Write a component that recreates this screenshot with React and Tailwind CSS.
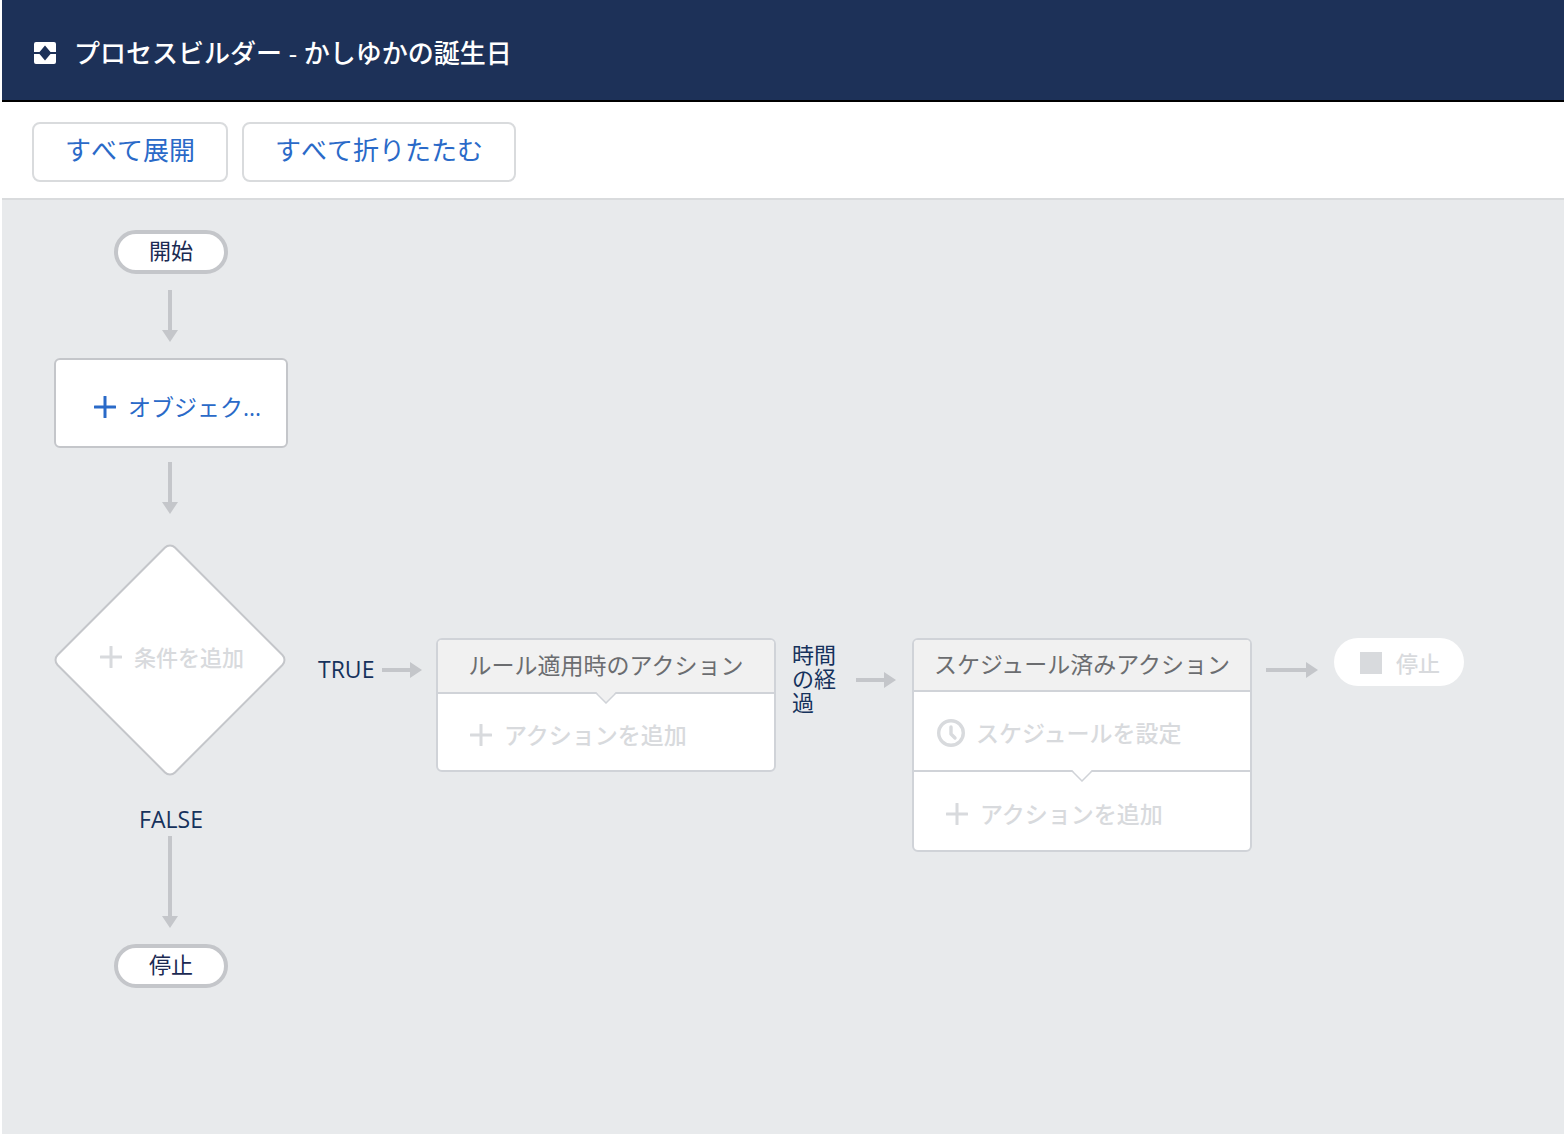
// src/App.jsx
function ProcessIcon() {
  return (
    <svg className="size-[22px] shrink-0" viewBox="0 0 22 22" fill="#ffffff" aria-hidden="true">
      <path d="M2 0H20Q22 0 22 2V10H16.5L11 3.6L5.5 10H0V2Q0 0 2 0Z" />
      <path d="M0 12H5.5L11 18.4L16.5 12H22V20Q22 22 20 22H2Q0 22 0 20Z" />
    </svg>
  );
}

function PlusIcon() {
  return (
    <svg className="size-[22px] shrink-0" viewBox="0 0 22 22" fill="currentColor" aria-hidden="true">
      <rect x="9.5" y="0" width="3" height="22" rx="0.5" />
      <rect x="0" y="9.5" width="22" height="3" rx="0.5" />
    </svg>
  );
}

function ClockIcon() {
  return (
    <svg className="size-7 shrink-0" viewBox="0 0 28 28" fill="none" stroke="currentColor" aria-hidden="true">
      <circle cx="14" cy="14" r="12.3" strokeWidth="3.4" />
      <path d="M14 8V15L18 19" strokeWidth="3.4" strokeLinecap="round" strokeLinejoin="round" />
    </svg>
  );
}

function DownArrow({ long }) {
  return long ? (
    <svg className="h-[92px] w-[18px] shrink-0" viewBox="0 0 18 92" fill="#c4c6ca" aria-hidden="true">
      <path d="M6 0H10V80H16L8 92L0 80H6Z" />
    </svg>
  ) : (
    <svg className="h-[52px] w-[18px] shrink-0" viewBox="0 0 18 52" fill="#c4c6ca" aria-hidden="true">
      <path d="M6 0H10V40H16L8 52L0 40H6Z" />
    </svg>
  );
}

function RightArrow({ long }) {
  return long ? (
    <svg className="h-4 w-[52px] shrink-0" viewBox="0 0 52 16" fill="#c4c6ca" aria-hidden="true">
      <path d="M0 6H40V0L52 8L40 16V10H0Z" />
    </svg>
  ) : (
    <svg className="h-4 w-10 shrink-0" viewBox="0 0 40 16" fill="#c4c6ca" aria-hidden="true">
      <path d="M0 6H28V0L40 8L28 16V10H0Z" />
    </svg>
  );
}

// Small pointer hanging from a card section
function Notch({ fill }) {
  return (
    <svg
      className="absolute top-full left-1/2 h-3 w-[22px] -translate-x-1/2"
      viewBox="0 0 22 12"
      aria-hidden="true"
    >
      <path d="M1 0H21L11 11Z" fill={fill} />
      <path d="M0.5 0.5L11 11L21.5 0.5" fill="none" stroke="#d0d3d8" strokeWidth="1.5" />
    </svg>
  );
}

function Terminal({ label }) {
  return (
    <div className="flex h-11 w-[114px] shrink-0 items-center justify-center rounded-full border-4 border-[#c4c6ca] bg-white pb-1 text-[22px] leading-6 text-[#1b2a52]">
      {label}
    </div>
  );
}

function ToolbarButton({ children }) {
  return (
    <button
      type="button"
      className="h-[60px] rounded-lg border-2 border-[#d9dbdd] bg-white px-[31px] pb-1 text-[26px] leading-8 text-[#2a6ac8] [font-kerning:none]"
    >
      {children}
    </button>
  );
}

export default function App() {
  return (
    <div className="min-h-screen bg-white pl-0.5 font-['Open_Sans','Noto_Sans_CJK_JP',sans-serif]">
      <div className="flex min-h-screen flex-col">
        <header className="flex h-[102px] items-center gap-[18px] border-b-2 border-black bg-[#1d3158] px-8 pt-1.5">
          <ProcessIcon />
          <h1 className="text-[26px] leading-8 font-medium text-white [font-kerning:none]">
            プロセスビルダー - かしゆかの誕生日
          </h1>
        </header>

        <div className="flex h-[98px] items-start gap-3.5 border-b-2 border-[#d9dbdd] px-[30px] pt-5">
          <ToolbarButton>すべて展開</ToolbarButton>
          <ToolbarButton>すべて折りたたむ</ToolbarButton>
        </div>

        <main className="flex flex-1 items-start bg-[#e8eaec] pt-[30px] pl-[52px]">
          {/* Main branch */}
          <div className="flex w-[234px] shrink-0 flex-col items-center">
            <Terminal label="開始" />
            <div className="mt-4">
              <DownArrow />
            </div>
            <button
              type="button"
              className="mt-4 flex h-[90px] w-full items-center gap-3 rounded-md border-2 border-[#c4c6ca] bg-white pt-2 pl-[38px] text-[23px] leading-6 text-[#2a6ac8]"
            >
              <PlusIcon />
              オブジェク...
            </button>
            <div className="mt-3.5">
              <DownArrow />
            </div>
            <div className="relative mt-[30px] flex size-[232px] items-center justify-center self-start">
              <div className="absolute size-[168px] rotate-45 rounded-lg border-2 border-[#c4c6ca] bg-white" />
              <button
                type="button"
                disabled
                className="relative flex items-center gap-3 pb-1.5 pl-1 text-[22px] leading-6 font-medium text-[#d8dadd]"
              >
                <PlusIcon />
                条件を追加
              </button>
            </div>
            <p className="mt-[31px] text-[23px] leading-6 text-[#16325c]">FALSE</p>
            <div className="mt-[5px]">
              <DownArrow long />
            </div>
            <div className="mt-4">
              <Terminal label="停止" />
            </div>
          </div>

          {/* Actions branch */}
          <div className="flex items-start pt-[408px] pl-[30px]">
            <p className="flex h-16 w-16 shrink-0 items-center pb-0.5 text-[23px] leading-6 text-[#16325c]">TRUE</p>
            <div className="mt-6 mr-3.5">
              <RightArrow />
            </div>

            <section className="w-[340px] shrink-0 rounded-md border-2 border-[#d0d3d8] bg-white">
              <div className="relative rounded-t-sm border-b-2 border-[#d0d3d8] bg-[#f1f1f1]">
                <h2 className="flex h-[52px] items-center justify-center pb-0.5 text-[23px] leading-6 text-[#6b6d70]">
                  ルール適用時のアクション
                </h2>
                <Notch fill="#f1f1f1" />
              </div>
              <button
                type="button"
                disabled
                className="flex h-[76px] w-full items-center gap-3 pt-1.5 pl-8 text-[23px] leading-6 font-medium text-[#d8dadd]"
              >
                <PlusIcon />
                アクションを追加
              </button>
            </section>

            <p className="mt-1 mr-4 ml-4 w-12 shrink-0 text-[22px] leading-6 text-[#16325c]">時間の経過</p>
            <div className="mt-[34px] mr-4">
              <RightArrow />
            </div>

            <section className="w-[340px] shrink-0 rounded-md border-2 border-[#d0d3d8] bg-white">
              <h2 className="flex h-[52px] items-center justify-center rounded-t-sm border-b-2 border-[#d0d3d8] bg-[#f1f1f1] pb-0.5 text-[23px] leading-6 text-[#6b6d70]">
                スケジュール済みアクション
              </h2>
              <div className="relative border-b-2 border-[#d0d3d8]">
                <button
                  type="button"
                  disabled
                  className="flex h-[78px] w-full items-center gap-[11px] pt-1 pl-[23px] text-[23px] leading-6 font-medium text-[#d8dadd]"
                >
                  <ClockIcon />
                  スケジュールを設定
                </button>
                <Notch fill="#ffffff" />
              </div>
              <button
                type="button"
                disabled
                className="flex h-[78px] w-full items-center gap-3 pt-1.5 pl-8 text-[23px] leading-6 font-medium text-[#d8dadd]"
              >
                <PlusIcon />
                アクションを追加
              </button>
            </section>

            <div className="mt-6 mr-4 ml-3.5">
              <RightArrow long />
            </div>
            <button
              type="button"
              disabled
              className="flex h-12 w-[130px] shrink-0 items-center gap-3.5 rounded-full bg-white pt-0.5 pl-[26px] text-[22px] leading-6 font-medium text-[#d8dadd]"
            >
              <span className="size-[22px] bg-[#d8dadd]" />
              停止
            </button>
          </div>
        </main>
      </div>
    </div>
  );
}
